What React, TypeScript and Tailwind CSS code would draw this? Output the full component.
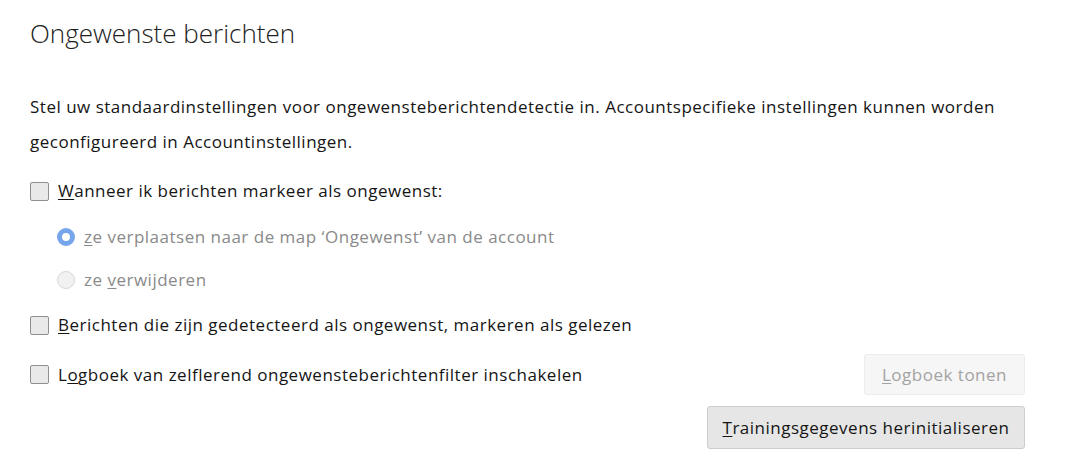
import React from "react";

const font = { fontFamily: '"Open Sans", "Noto Sans", sans-serif' };

function Checkbox({ children }: { children: React.ReactNode }) {
  return (
    <label className="flex items-center gap-[9px] h-6">
      <span className="w-[19px] h-[19px] rounded-[2px] border border-[#8f8f8f] bg-[#e9e9e9] shrink-0" />
      <span className="text-[17px] tracking-[0.5px] text-[#151515]">{children}</span>
    </label>
  );
}

function Radio({ selected, children }: { selected?: boolean; children: React.ReactNode }) {
  return (
    <label className="flex items-center gap-[9px] h-6 pl-[27px]">
      {selected ? (
        <span className="w-[18px] h-[18px] rounded-full border-[5px] border-[#76a5eb] bg-white shrink-0" />
      ) : (
        <span className="w-[18px] h-[18px] rounded-full border border-[#d6d6d6] bg-[#f1f1f1] shrink-0" />
      )}
      <span className="text-[17px] tracking-[0.5px] text-[#8a8a8a]">{children}</span>
    </label>
  );
}

export default function App() {
  return (
    <div style={font} className="w-[1076px] h-[461px] bg-white pl-[30px] pr-[51px] pt-[15px] overflow-hidden">
      <h1 className="text-[26px] leading-[36px] font-light text-[#222]">Ongewenste berichten</h1>

      <p className="mt-[38px] text-[17px] tracking-[0.5px] leading-[35px] text-[#151515]">
        Stel uw standaardinstellingen voor ongewensteberichtendetectie in. Accountspecifieke instellingen kunnen worden
        <br />
        geconfigureerd in Accountinstellingen.
      </p>

      <section className="mt-[20px] flex flex-col">
        <Checkbox>
          <u className="underline-offset-2">W</u>anneer ik berichten markeer als ongewenst:
        </Checkbox>
        <div className="mt-[22px]">
          <Radio selected>
            <u className="underline-offset-2">z</u>e verplaatsen naar de map ‘Ongewenst’ van de account
          </Radio>
        </div>
        <div className="mt-[19px]">
          <Radio>
            ze <u className="underline-offset-2">v</u>erwijderen
          </Radio>
        </div>
        <div className="mt-[21px]">
          <Checkbox>
            <u className="underline-offset-2">B</u>erichten die zijn gedetecteerd als ongewenst, markeren als gelezen
          </Checkbox>
        </div>

        <div className="mt-[17px] flex items-center justify-between">
          <Checkbox>
            L<u className="underline-offset-2">o</u>gboek van zelflerend ongewensteberichtenfilter inschakelen
          </Checkbox>
          <button className="h-[41px] w-[161px] rounded-[3px] border border-[#ececec] bg-[#f6f6f6] text-[17px] tracking-[0.5px] text-[#a3a3a3]">
            <u className="underline-offset-2">L</u>ogboek tonen
          </button>
        </div>

        <div className="mt-[11px] flex justify-end">
          <button className="h-[43px] w-[318px] rounded-[3px] border border-[#cdcdcd] bg-[#e6e6e6] text-[17px] tracking-[0.5px] text-[#151515]">
            <u className="underline-offset-2">T</u>rainingsgegevens herinitialiseren
          </button>
        </div>
      </section>
    </div>
  );
}
